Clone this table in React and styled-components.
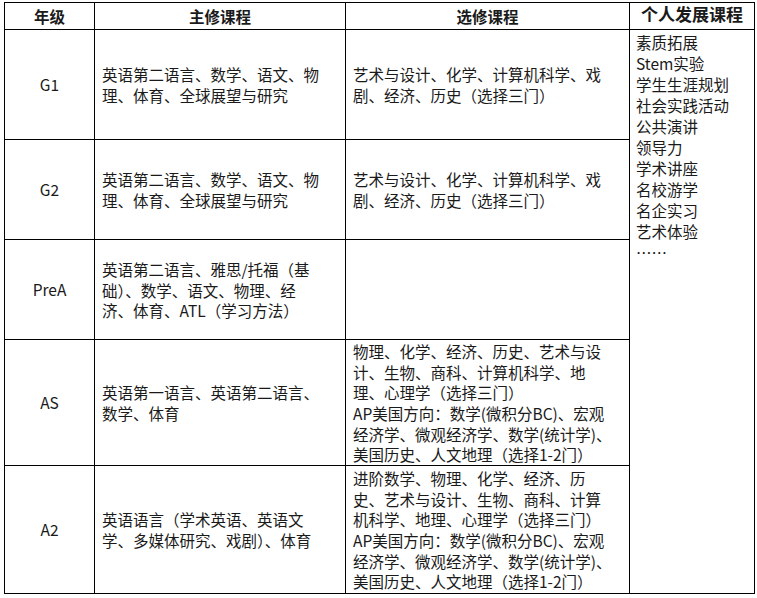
import React from "react";
import styled, { createGlobalStyle } from "styled-components";

const GlobalStyle = createGlobalStyle`
  body {
    margin: 0;
    background: #fff;
    color: #1a1a1a;
    font-family: "Microsoft YaHei", "Noto Sans CJK SC", "Noto Sans", sans-serif;
  }
`;

const Page = styled.div`
  padding: 2px 3px 0 4px;
`;

const Table = styled.table`
  border-collapse: collapse;
  table-layout: fixed;
  width: 750px;
  font-size: 15.5px;
  line-height: 20.6px;
`;

const HeadCell = styled.th`
  border: 1px solid #000;
  height: 26px;
  padding: 0;
  font-weight: 700;
  font-size: ${(p) => (p.$big ? "17px" : "15.5px")};
  text-align: center;
  vertical-align: ${(p) => (p.$big ? "top" : "middle")};
  line-height: ${(p) => (p.$big ? "22px" : "20px")};
`;

const Row = styled.tr`
  height: ${(p) => p.$h}px;
`;

const GradeCell = styled.td`
  border: 1px solid #000;
  padding: 0;
  text-align: center;
  vertical-align: middle;
`;

const TextCell = styled.td`
  border: 1px solid #000;
  padding: 1px 4px 0 7px;
  vertical-align: middle;
`;

const SideCell = styled.td`
  border: 1px solid #000;
  padding: 2px 4px 0 6px;
  vertical-align: top;
  line-height: 21px;
`;

const Line = styled.div`
  white-space: nowrap;
`;

const rows = [
  {
    grade: "G1",
    h: 110,
    main: ["英语第二语言、数学、语文、物", "理、体育、全球展望与研究"],
    elective: ["艺术与设计、化学、计算机科学、戏", "剧、经济、历史（选择三门）"],
  },
  {
    grade: "G2",
    h: 100,
    main: ["英语第二语言、数学、语文、物", "理、体育、全球展望与研究"],
    elective: ["艺术与设计、化学、计算机科学、戏", "剧、经济、历史（选择三门）"],
  },
  {
    grade: "PreA",
    h: 100,
    main: [
      "英语第二语言、雅思/托福（基",
      "础）、数学、语文、物理、经",
      "济、体育、ATL（学习方法）",
    ],
    elective: [],
  },
  {
    grade: "AS",
    h: 126,
    main: ["英语第一语言、英语第二语言、", "数学、体育"],
    elective: [
      "物理、化学、经济、历史、艺术与设",
      "计、生物、商科、计算机科学、地",
      "理、心理学（选择三门）",
      "AP美国方向：数学(微积分BC)、宏观",
      "经济学、微观经济学、数学(统计学)、",
      "美国历史、人文地理（选择1-2门）",
    ],
  },
  {
    grade: "A2",
    h: 128,
    main: ["英语语言（学术英语、英语文", "学、多媒体研究、戏剧）、体育"],
    elective: [
      "进阶数学、物理、化学、经济、历",
      "史、艺术与设计、生物、商科、计算",
      "机科学、地理、心理学（选择三门）",
      "AP美国方向：数学(微积分BC)、宏观",
      "经济学、微观经济学、数学(统计学)、",
      "美国历史、人文地理（选择1-2门）",
    ],
  },
];

const personal = [
  "素质拓展",
  "Stem实验",
  "学生生涯规划",
  "社会实践活动",
  "公共演讲",
  "领导力",
  "学术讲座",
  "名校游学",
  "名企实习",
  "艺术体验",
  "……",
];

export default function App() {
  return (
    <Page>
      <GlobalStyle />
      <Table>
        <colgroup>
          <col style={{ width: 90 }} />
          <col style={{ width: 251 }} />
          <col style={{ width: 284 }} />
          <col style={{ width: 125 }} />
        </colgroup>
        <thead>
          <tr>
            <HeadCell>年级</HeadCell>
            <HeadCell>主修课程</HeadCell>
            <HeadCell>选修课程</HeadCell>
            <HeadCell $big>个人发展课程</HeadCell>
          </tr>
        </thead>
        <tbody>
          {rows.map((row, i) => (
            <Row key={row.grade} $h={row.h}>
              <GradeCell>{row.grade}</GradeCell>
              <TextCell>
                {row.main.map((l) => (
                  <Line key={l}>{l}</Line>
                ))}
              </TextCell>
              <TextCell>
                {row.elective.map((l) => (
                  <Line key={l}>{l}</Line>
                ))}
              </TextCell>
              {i === 0 && (
                <SideCell rowSpan={rows.length}>
                  {personal.map((l) => (
                    <Line key={l}>{l}</Line>
                  ))}
                </SideCell>
              )}
            </Row>
          ))}
        </tbody>
      </Table>
    </Page>
  );
}
